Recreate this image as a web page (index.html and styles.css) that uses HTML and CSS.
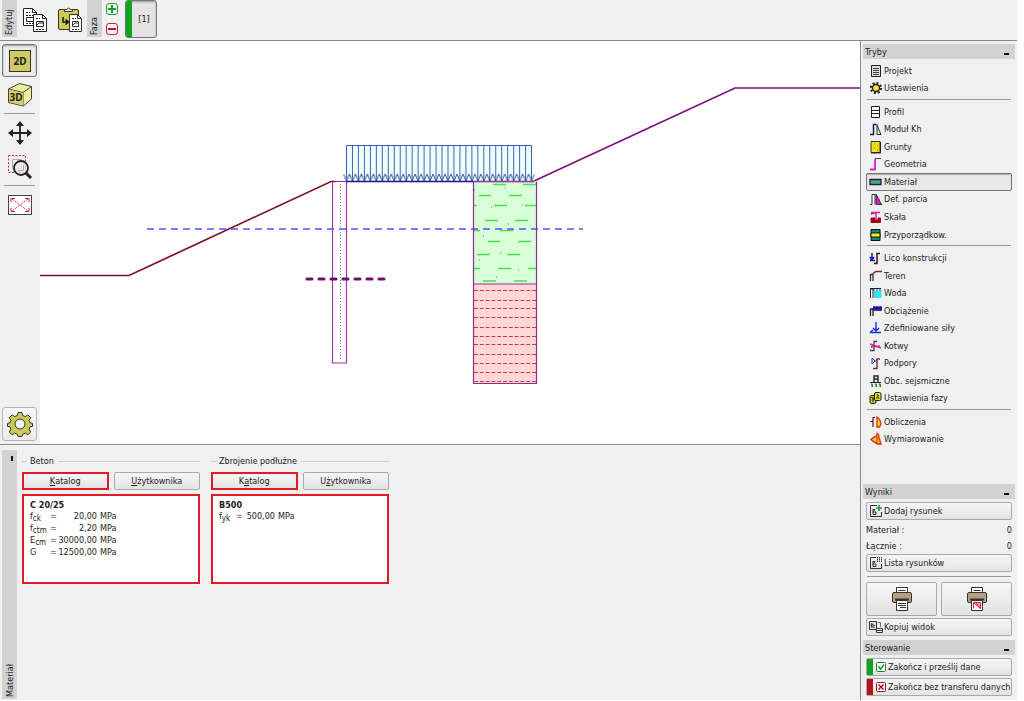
FILE: index.html
```html
<!DOCTYPE html>
<html lang="pl">
<head>
<meta charset="utf-8">
<title>Materiał</title>
<link rel="stylesheet" href="styles.css">
</head>
<body>
<div class="app">
  <header class="topbar">
    <span class="vlabel">Edytuj</span>
    <button class="flat copy" aria-label="Kopiuj">
      <svg width="26" height="26" viewBox="0 0 26 26" fill="#fff" stroke="#222">
        <path d="M1.500 1.500h9l4 4v13h-13z"/><path d="M10.500 1.500v4h4" fill="none"/><path d="M4 5.500h4M4 8.500h8M4 16.500h8" fill="none" stroke-dasharray="2 1"/><path d="M4.500 10.500h7v4h-7z"/>
        <path d="M11.500 7.500h9l4 4v13h-13z"/><path d="M20.500 7.500v4h4" fill="none"/><path d="M14 11.500h4M14 22.500h8" fill="none" stroke-dasharray="2 1"/><path d="M14.500 14.500h7v5h-7zM15 18l2-2h4" fill="none"/>
      </svg>
    </button>
    <button class="flat paste" aria-label="Wklej">
      <svg width="26" height="26" viewBox="0 0 26 26" fill="none" stroke="#333">
        <rect x="1.500" y="2.500" width="20" height="20" rx="1.500" fill="#cfca55"/><path d="M7.500 4.500v-2h2q2-3 4 0h2v2z" fill="#eee"/>
        <path d="M6 10v5h5M8.500 12.500l3 2.500-3 2.500" stroke="#111" stroke-width="1.500"/>
        <path d="M12.500 7.500h8l4 4v13h-12z" fill="#fff"/><path d="M20.500 7.500v4h4"/><path d="M15 11.500h4M15 22.500h7" stroke-dasharray="2 1"/><path d="M15.500 14.500h6v5h-6zM16 18l2-2h3"/>
      </svg>
    </button>
    <span class="vlabel">Faza</span>
    <div class="phase-edit">
      <button class="flat" aria-label="Dodaj fazę"><svg width="12" height="12" viewBox="0 0 12 12" fill="#f4fbf4" stroke="#2a9a3a"><rect x=".5" y=".5" width="11" height="11" rx="2.500"/><path d="M6 2v8M2 6h8" stroke="#159a2c" stroke-width="2"/></svg></button>
      <button class="flat" aria-label="Usuń fazę"><svg width="12" height="12" viewBox="0 0 12 12" fill="#fbf4f4" stroke="#a03040"><rect x=".5" y=".5" width="11" height="11" rx="2.500"/><path d="M2 6h8" stroke="#c00f2c" stroke-width="2"/></svg></button>
    </div>
    <button class="phase"><i class="stripe"></i><span>[1]</span></button>
  </header>

  <div class="left">
    <section class="workspace">
      <div class="tools">
        <button class="tool on" aria-label="2D"><svg width="22" height="22" viewBox="0 0 22 22"><rect x=".5" y=".5" width="21" height="21" fill="#cfca63" stroke="#333"/><text class="ico2" x="11" y="15" text-anchor="middle">2D</text></svg></button>
        <button class="flat" aria-label="3D"><svg width="26" height="26" viewBox="0 0 26 26"><path d="M1.500 7l11-5.500L24.500 4.500V17l-8 7-15-3.500z" fill="#eeeca0" stroke="#444"/><path d="M1.500 7l14.500 3.500 8.500-6M16 10.500v13.500" fill="none" stroke="#444"/><path d="M2 7.500l14 3.500v12.500L2 20z" fill="#d3ce66"/><text class="ico3" x="9" y="19" text-anchor="middle">3D</text></svg></button>
        <hr>
        <button class="flat" aria-label="Przesuń"><svg width="24" height="24" viewBox="0 0 24 24"><path d="M12 3v18M3 12h18" stroke="#222" stroke-width="1.800"/><path d="M12 0l4 5H8zM12 24l4-5H8zM0 12l5-4v8zM24 12l-5-4v8z" fill="#222"/></svg></button>
        <button class="flat" aria-label="Powiększ"><svg width="26" height="26" viewBox="0 0 26 26" fill="none"><path d="M1.500 1.500h17v17h-17z" stroke="#e02040" stroke-dasharray="2 1.500"/><path d="M5.500 5.500h9v9h-9z" stroke="#aaa"/><circle cx="14" cy="14" r="7" fill="#eee" fill-opacity=".75" stroke="#222" stroke-width="1.800"/><path d="M11 16.500h5.500V11" stroke="#aaa"/><path d="M19 19l5 5" stroke="#222" stroke-width="3"/></svg></button>
        <hr>
        <button class="flat" aria-label="Dopasuj"><svg width="24" height="20" viewBox="0 0 24 20" fill="none" stroke="#d8203c"><rect x=".5" y=".5" width="23" height="19" fill="#fff" stroke="#444"/><path d="M4 4l16 12M20 4L4 16" stroke-dasharray="2 1.500"/><path d="M3 7V3.500h4M17 3.500h4V7M21 13v3.500h-4M7 16.500H3V13"/></svg></button>
        <button class="tool gear" aria-label="Ustawienia rysunku"><svg width="26" height="26" viewBox="-13 -13 26 26"><path d="M-2-11.500h4l.7 3 2.600 1.100 2.600-1.700 2.800 2.800-1.700 2.600 1.100 2.600 2.400.5v3l-2.500.5-1 2.500 1.700 2.600-2.800 2.800-2.600-1.700-2.600 1.100-.7 2.400h-4l-.7-2.400-2.600-1.100-2.600 1.700-2.800-2.800 1.700-2.600-1-2.500-2.500-.5v-3l2.400-.5 1.100-2.600-1.700-2.600 2.800-2.800 2.600 1.700 2.600-1.100z" fill="#cfca55" stroke="#333"/><circle r="5" fill="#f2f2f2" stroke="#333"/></svg></button>
      </div>
      <svg class="drawing" viewBox="40 41 820 403" preserveAspectRatio="xMaxYMin slice" role="img" aria-label="Przekrój">
        <defs>
          <pattern id="load" x="346" y="146" width="5.970" height="36" patternUnits="userSpaceOnUse"><path d="M.5 0v36" stroke="#3a66b0"/></pattern>
          <pattern id="tips" x="343.500" y="146" width="5.970" height="36" patternUnits="userSpaceOnUse"><path d="M0 28l3 7 3-7" fill="none" stroke="#3a5a98"/></pattern>
        </defs>
        <rect x="473.500" y="181.500" width="63" height="102" fill="#d9ffd9"/>
        <rect x="473.500" y="284" width="63" height="99.500" fill="#ffd8d6"/>
        <path stroke="#4be04b" stroke-width="1.300" d="M493 184.500h13M523 184.500h13M479 195.500h12M509 195.500h13M474 205.500h3M494 205.500h13M525 205.500h11M485 220.500h13M515 220.500h13M474 230.500h6M500 230.500h13M488 241.500h12M518 241.500h13M477 254.500h13M507 254.500h13M474 268.500h6M498 268.500h13M528 268.500h8M483 281h13M514 281h13"/>
        <path stroke="#3a9a4a" d="M505 188h1M491 207h1M522 205h1M508 224h1M483 236h1M500 253h1M479 260h1M518 270h1M496 277h1M474 190h1"/>
        <path stroke="#d8354c" stroke-dasharray="4 1.800" d="M474 290.500h62M474 300.500h62M474 308.500h62M474 317.500h62M474 327.500h62M474 336.500h62M474 344.500h62M474 354.500h62M474 363.500h62M474 372.500h62M474 381.500h62"/>
        <rect x="346" y="146" width="186" height="35" fill="#f1fcff"/>
        <rect x="346" y="146" width="186" height="35" fill="url(#load)"/>
        <rect x="343.500" y="146" width="191" height="35" fill="url(#tips)"/>
        <path d="M346.500 181v-35.500h185V181" fill="none" stroke="#2f62b0"/>
        <path d="M147 229h436" stroke="#5a50ff" stroke-width="1.400" stroke-dasharray="7 5"/>
        <path d="M333 181.500h140M473.500 181.500v202h63v-202M473.500 284h63" fill="none" stroke="#8a2a92" stroke-width="1.200"/>
        <path d="M332.500 181.500v181.500h14V181.500" fill="none" stroke="#9a3aa4" stroke-width="1.200"/>
        <path d="M340.500 184v177" stroke="#a05aa0" stroke-dasharray="1 2"/>
        <path d="M346 181.500h188" stroke="#26108c" stroke-width="1.600"/>
        <path d="M473 181.500h61" stroke="#c02aa0"/>
        <path d="M40 275.500h89l202-94h4" fill="none" stroke="#7a1424" stroke-width="1.700"/>
        <path d="M534 181l201-93h125" fill="none" stroke="#7a1080" stroke-width="1.700"/>
        <path d="M307 279h79" stroke="#6e0c74" stroke-width="3" stroke-linecap="round" stroke-dasharray="5 7"/>
      </svg>
    </section>

    <section class="dock">
      <div class="dock-tab"><i class="pin"></i><span class="vtext">Materiał</span></div>
      <fieldset class="group">
        <legend>Beton</legend>
        <div class="pair"><button class="btn hot"><u>K</u>atalog</button><button class="btn"><u>U</u>żytkownika</button></div>
        <div class="info">
          <b>C 20/25</b>
          <table>
            <tr><th>f<sub>ck</sub></th><td>=</td><td class="num">20,00</td><td>MPa</td></tr>
            <tr><th>f<sub>ctm</sub></th><td>=</td><td class="num">2,20</td><td>MPa</td></tr>
            <tr><th>E<sub>cm</sub></th><td>=</td><td class="num">30000,00</td><td>MPa</td></tr>
            <tr><th>G</th><td>=</td><td class="num">12500,00</td><td>MPa</td></tr>
          </table>
        </div>
      </fieldset>
      <fieldset class="group">
        <legend>Zbrojenie podłużne</legend>
        <div class="pair"><button class="btn hot">K<u>a</u>talog</button><button class="btn">U<u>ż</u>ytkownika</button></div>
        <div class="info">
          <b>B500</b>
          <table class="narrow"><tr><th>f<sub>yk</sub></th><td>=</td><td class="num">500,00</td><td>MPa</td></tr></table>
        </div>
      </fieldset>
    </section>
  </div>

  <aside class="side">
    <h2>Tryby<button class="min" aria-label="Zwiń tryby"></button></h2>
    <nav class="modes">
      <button><svg viewBox="0 0 14 14"><path d="M2.500 1.500h9v11h-9z" fill="#ddd" stroke="#222"/><path d="M4 4.500h6M4 6.500h6M4 8.500h6M4 10.500h6" stroke="#444"/></svg>Projekt</button>
      <button><svg viewBox="0 0 14 14"><circle cx="7" cy="7" r="5" fill="none" stroke="#222" stroke-width="2.200" stroke-dasharray="2 1.900"/><circle cx="7" cy="7" r="3.500" fill="#f8ee30" stroke="#222" stroke-width="1.400"/></svg>Ustawienia</button>
      <hr>
      <button><svg viewBox="0 0 14 14"><path d="M2.500 1.500h8v11h-8zM2.500 5.500h8M2.500 8.500h8" fill="#fafafa" stroke="#222"/></svg>Profil</button>
      <button><svg viewBox="0 0 14 14" fill="none"><path d="M1 12.500h3.500V2.500H7" stroke="#111d55" stroke-width="1.500"/><path d="M8 2v10.500h4L10 8 8 3" fill="#ef9" stroke="#222266"/></svg>Moduł Kh</button>
      <button><svg viewBox="0 0 14 14"><path d="M2 1.500h9v11H2z" fill="#f0e020" stroke="#333"/><path d="M2 13h9.500V2" fill="none" stroke="#222"/><path d="M5 4h1M8 6h1M5 8h1M8 10h1" stroke="#998800"/></svg>Grunty</button>
      <button><svg viewBox="0 0 14 14" fill="none"><path d="M1 12.500h5V2" stroke="#e020c0" stroke-width="1.800"/><path d="M6 1.500h6" stroke="#702060"/></svg>Geometria</button>
      <button class="current"><svg viewBox="0 0 14 14"><path d="M1 4.500h11v5H1z" fill="#45a59a" stroke="#222" stroke-width="1.300"/></svg>Materiał</button>
      <button><svg viewBox="0 0 14 14"><path d="M1 12.500h2v-10h3v10" fill="#fff" stroke="#333"/><path d="M7 2l1 2 2 3 1 3 2 2.500H7z" fill="#e020d0" stroke="#222" stroke-width=".8"/></svg>Def. parcia</button>
      <button><svg viewBox="0 0 14 14"><path d="M2 8h4v2h3V8h2.500v4.500H2z" fill="#9c0820" stroke="#9c0820"/><path d="M2 2.500h9M7 2v8M2 4l4-1" fill="none" stroke="#d820a0" stroke-width="1.400"/></svg>Skała</button>
      <button><svg viewBox="0 0 14 14"><path d="M2 1.500h9v11H2z" fill="#16876c" stroke="#111"/><path d="M2 5h9v4H2z" fill="#f8ee30" stroke="#111"/></svg>Przyporządkow.</button>
      <hr>
      <button><svg viewBox="0 0 14 14" fill="none"><path d="M3 2v7M1 6l2 3 2-3M1 9.500h5" stroke="#1818b8" stroke-width="1.500"/><path d="M5 12.500h3V2.500h3" stroke="#3c1018" stroke-width="1.500"/></svg>Lico konstrukcji</button>
      <button><svg viewBox="0 0 14 14" fill="none"><path d="M1.500 12V5.500H4V12" stroke="#333" stroke-width="1.300"/><path d="M4 5q2-3 4-2.500h5" stroke="#8c2028" stroke-width="1.400"/></svg>Teren</button>
      <button><svg viewBox="0 0 14 14"><path d="M1.500 12V3H4v9" fill="#fff" stroke="#222"/><path d="M5 5h7.500v7H5z" fill="#30e6f4"/><path d="M4 4h9" stroke="#1040c8" stroke-dasharray="2 1"/><path d="M1 2.500h11" stroke="#222"/></svg>Woda</button>
      <button><svg viewBox="0 0 14 14" fill="none"><path d="M1.500 12V5H4v7M4 6h9" stroke="#222" stroke-width="1.300"/><path d="M4 4h9" stroke="#1212b8" stroke-width="3"/><path d="M5 2v5M8 2v5M11 2v5" stroke="#1212b8"/></svg>Obciążenie</button>
      <button><svg viewBox="0 0 14 14" fill="none" stroke="#1430e0" stroke-width="1.400"><path d="M7 1v9M4 7l3 3 3-3M1 11.500h11M4 9l-3 2.500"/></svg>Zdefiniowane siły</button>
      <button><svg viewBox="0 0 14 14" fill="none"><path d="M1 11.500h4V2.500h3" stroke="#444" stroke-width="1.300"/><path d="M1 5l11 4M2 8l9-1" stroke="#d020a0" stroke-width="1.600"/></svg>Kotwy</button>
      <button><svg viewBox="0 0 14 14" fill="none"><path d="M3 2v6l3-3zM5 5h3" stroke="#2030d0"/><path d="M4 12.500h4V3h3" stroke="#703040" stroke-width="1.400"/></svg>Podpory</button>
      <button><svg viewBox="0 0 14 14" fill="none"><path d="M5 8V2h4v6M5 5h4" stroke="#222" stroke-width="1.400"/><path d="M1 8.500h11" stroke="#222"/><path d="M2 10q2 0 1 3M6 10q2 0 1 3M10 10q2 0 1 3" stroke="#18883a" stroke-width="1.600"/></svg>Obc. sejsmiczne</button>
      <button><svg viewBox="0 0 14 14" stroke="#222"><rect x="1" y="4.500" width="6" height="8" rx="1.500" fill="#c8c020"/><rect x="5.500" y="1.500" width="6.500" height="8" rx="1.500" fill="#e8e020"/><path d="M2.500 6L4 8l1.500-2M4 8v3M7.500 4q2-1 2 1l-2 2h3" fill="none"/></svg>Ustawienia fazy</button>
      <hr>
      <button><svg viewBox="0 0 14 14" fill="none"><path d="M1 6.500h3M4 12V2.500h2" stroke="#5a1c1c" stroke-width="1.200"/><path d="M8 2l3 3 1 4-1.500 3H8z" fill="#ffd820" stroke="#d83018" stroke-width="1.300"/></svg>Obliczenia</button>
      <button><svg viewBox="0 0 14 14"><path d="M8 1.500q3 1 1.500 4.500l1.500 2v1l1 3H8q-1-2-3-2L2 7.500 5 5q3 0 3-3.500z" fill="#ffc020" stroke="#d02c18" stroke-width="1.300"/><path d="M8 4v7" stroke="#d02c18"/></svg>Wymiarowanie</button>
    </nav>

    <h2>Wyniki<button class="min" aria-label="Zwiń wyniki"></button></h2>
    <div class="results">
      <button class="btn row"><svg viewBox="0 0 14 14" fill="none" stroke="#333"><path d="M8 1.500H1.500v11h11V8"/><path d="M4 5v5.500h3V8H4l2-2.500H4"/><path d="M10 1v6M7 4h6" stroke="#1aa040" stroke-width="1.700"/></svg>Dodaj rysunek</button>
      <div class="counts">
        <p><span>Materiał :</span><span>0</span></p>
        <p><span>Łącznie :</span><span>0</span></p>
      </div>
      <button class="btn row"><svg viewBox="0 0 14 14" fill="none" stroke="#333"><path d="M7 1.500H1.500v11h11V8"/><path d="M4 5v5.500h3V8H4l2-2.500H4"/><path d="M8.500 1v5M10.500 1v5M12.500 1v5" stroke-dasharray="1.500 .5"/></svg>Lista rysunków</button>
      <hr>
      <div class="prints">
        <button class="btn" aria-label="Drukuj raport"><svg width="20" height="24" viewBox="0 0 20 24" stroke="#333"><path d="M4.500 8V.5h11V8" fill="#fff"/><path d="M6.500 3.500h7" /><rect x=".5" y="5.500" width="19" height="10" rx="1.500" fill="#b79f82"/><path d="M3 12.500h14" stroke-width="2"/><path d="M4.500 13.500h11v10h-11z" fill="#fff"/><path d="M6 16.500h8M6 18.500h8M8 20.500h6"/></svg></button>
        <button class="btn" aria-label="Drukuj rysunek"><svg width="20" height="24" viewBox="0 0 20 24" stroke="#333"><path d="M4.500 8V.5h11V8" fill="#fff"/><path d="M6.500 3.500h7"/><rect x=".5" y="5.500" width="19" height="10" rx="1.500" fill="#b79f82"/><path d="M3 12.500h14" stroke-width="2"/><path d="M4.500 13.500h11v10h-11z" fill="#fff"/><path d="M6.500 15.500h7v6zM6.500 15.500v6M9 16l4 5" stroke="#e0203c" fill="#f9a0a8"/></svg></button>
      </div>
      <button class="btn row"><svg viewBox="0 0 14 14" fill="none" stroke="#333"><path d="M.5 1.500h7v8h-7z" fill="#ddd"/><path d="M2.500 7.500v-4l3 2-3 1 3 1"/><path d="M8.500 2.500h3V7" stroke="#1aa040"/><path d="M7.500 8.500h6v4h-6zM7.500 10.500h6" fill="#fff"/></svg>Kopiuj widok</button>
    </div>
    <h2>Sterowanie<button class="min" aria-label="Zwiń sterowanie"></button></h2>
    <div class="control">
      <button class="btn end"><i class="stripe"></i><svg viewBox="0 0 14 14" fill="#f4fff4" stroke="#1a8a32"><rect x="3.500" y="2.500" width="9" height="9" rx="1"/><path d="M5.500 6.500l2 2.500 3.500-4.500" fill="none" stroke-width="1.400"/></svg>Zakończ i prześlij dane</button>
      <button class="btn end no"><i class="stripe"></i><svg viewBox="0 0 14 14" fill="#fff4f4" stroke="#8c1424"><rect x="3.500" y="2.500" width="9" height="9" rx="1"/><path d="M5.500 4.500l5 5M10.500 4.500l-5 5" stroke-width="1.400"/></svg>Zakończ bez transferu danych</button>
    </div>
  </aside>
</div>
</body>
</html>
```
FILE: styles.css
```css
* { box-sizing: border-box; }
body {
  margin: 0;
  padding: 0 7px 1px 0;
  background: #fff;
  color: #1c1c1c;
  font: 9px/12px "DejaVu Sans Condensed", "Noto Sans", sans-serif;
}
button { font: inherit; color: inherit; padding: 0; margin: 0; }
svg { display: block; flex: none; }
hr { border: 0; border-top: 1px solid #999; margin: 0; }
h2 { margin: 0; font: inherit; }

.app {
  display: grid;
  grid-template: 41px minmax(0, 1fr) / minmax(0, 1fr) 157px;
  height: calc(100vh - 1px);
  min-height: 640px;
  background: #f0f0f0;
}

.topbar {
  grid-column: 1 / -1;
  display: flex;
  align-items: center;
  border-bottom: 1px solid #8a8a8a;
  padding-left: 2px;
}
.vlabel, .vtext { writing-mode: vertical-rl; transform: rotate(180deg); }
.vlabel {
  align-self: stretch;
  width: 15px;
  line-height: 15px;
  margin-bottom: 3px;
  padding-top: 2px;
  background: #d2d2d2;
}
.flat { border: 0; background: none; display: grid; place-items: center; }
.copy { width: 36px; }
.paste { width: 34px; }
.phase-edit { display: grid; gap: 8px; width: 20px; margin-bottom: 2px; justify-items: center; }
.phase {
  display: flex;
  align-items: stretch;
  width: 32px;
  height: 38px;
  margin-left: 3px;
  margin-bottom: 2px;
  border: 1px solid #777;
  border-radius: 3px;
  background: #e3e3e3;
  overflow: hidden;
  box-shadow: inset 0 1px 2px #999;
}
.phase span { flex: 1; align-self: center; }
.stripe { width: 6px; background: #0aa51c; }

.left { display: flex; flex-direction: column; min-width: 0; }
.workspace { flex: 1; display: flex; min-height: 0; background: #fff; }
.tools {
  width: 40px;
  padding: 3px 3px 3px 2px;
  background: #f0f0f0;
  display: flex;
  flex-direction: column;
  gap: 5px;
}
.tools hr { margin: 0 2px; }
.tools .flat { height: 26px; }
.tools hr + .flat { margin: 0 0 2px; height: 28px; }
.tool {
  height: 34px;
  border: 1px solid #b5b5b5;
  border-radius: 3px;
  background: linear-gradient(#f6f6f6, #ececec);
  display: grid;
  place-items: center;
  flex: none;
}
.tool.on { height: 33px; border-color: #777; background: #ececec; box-shadow: inset 0 1px 2px #999; }
.gear { margin-top: auto; }
.ico2, .ico3 { font: bold 10px "Noto Sans", sans-serif; fill: #222; }
.drawing { flex: 1; min-width: 0; height: 100%; }

.dock {
  height: 256px;
  border-top: 1px solid #8a8a8a;
  padding: 5px 0 1px 2px;
  display: flex;
  align-items: stretch;
}
.dock-tab {
  width: 15px;
  background: #d2d2d2;
  display: flex;
  flex-direction: column;
  justify-content: space-between;
  align-items: center;
  padding: 6px 0 2px;
}
.pin { width: 2px; height: 5px; margin-left: 5px; background: #111; }
.group { border: 0; border-top: 1px solid #cfcfcf; margin: 5px 0 0 5px; padding: 5px 0 0; width: 178px; }
.group + .group { margin-left: 11px; }
legend { margin-left: 5px; padding: 0 4px 0 3px; }
.pair { display: grid; grid-template-columns: 1fr 1fr; gap: 5px; margin-bottom: 4px; }
.btn {
  height: 18px;
  border: 1px solid #a9a9a9;
  border-radius: 2px;
  background: linear-gradient(#f6f6f6, #ededed 50%, #e2e2e2);
  display: flex;
  align-items: center;
  justify-content: center;
  white-space: nowrap;
}
.pair .btn.hot { border: 2px solid #e01b24; border-radius: 0; }
.info { height: 90px; border: 2px solid #e01b24; background: #fff; padding: 4px 6px; }
.info b { display: block; line-height: 10px; }
table { border-collapse: collapse; }
th, td { padding: 0; height: 12px; line-height: 12px; font-weight: normal; text-align: left; white-space: nowrap; }
th { width: 20px; }
td:nth-child(2) { width: 8px; }
td.num { width: 42px; text-align: right; padding-right: 3px; }
.narrow th { width: 17px; }
.narrow td.num { width: 34px; }
sub { font-size: 8px; line-height: 0; vertical-align: -2px; }

.side {
  display: flex;
  flex-direction: column;
  min-width: 0;
  border-left: 1px solid #8a8a8a;
  padding: 3px 2px 4px;
}
h2 {
  display: flex;
  justify-content: space-between;
  align-items: center;
  height: 15px;
  flex: none;
  padding: 0 6px 0 2px;
  background: #d2d2d2;
}
.min { border: 0; width: 5px; height: 2px; background: #111; margin-top: 5px; }
.modes {
  flex: 1;
  display: flex;
  flex-direction: column;
  padding: 3px 3px 36px;
}
.modes button {
  flex: 1 1 0;
  min-height: 0;
  display: flex;
  align-items: center;
  gap: 1px;
  border: 1px solid transparent;
  border-radius: 2px;
  background: none;
  padding-left: 2px;
}
.modes button.current { border-color: #777; background: #e8e8e8; box-shadow: inset 0 1px 1px #aaa; }
.modes hr { margin: 2px 1px 3px; }
.modes svg, .row svg, .end svg { width: 14px; height: 14px; }
.results { display: flex; flex-direction: column; padding: 3px 3px 4px; }
.row { justify-content: flex-start; padding-left: 2px; gap: 1px; }
.counts { padding-top: 2px; }
.counts p { display: flex; justify-content: space-between; margin: 0; line-height: 16px; }
.results hr { margin: 4px 1px 5px; }
.prints { display: grid; grid-template-columns: 1fr 1fr; gap: 4px; margin-bottom: 2px; }
.prints .btn { height: 34px; }
.control { display: grid; grid-template-columns: minmax(0, 1fr); gap: 2px; padding: 3px 3px 0; }
.end { justify-content: flex-start; }
.end .stripe { align-self: stretch; flex: none; }
.end svg { margin-right: 1px; }
.no .stripe { background: #b8101c; }
```
